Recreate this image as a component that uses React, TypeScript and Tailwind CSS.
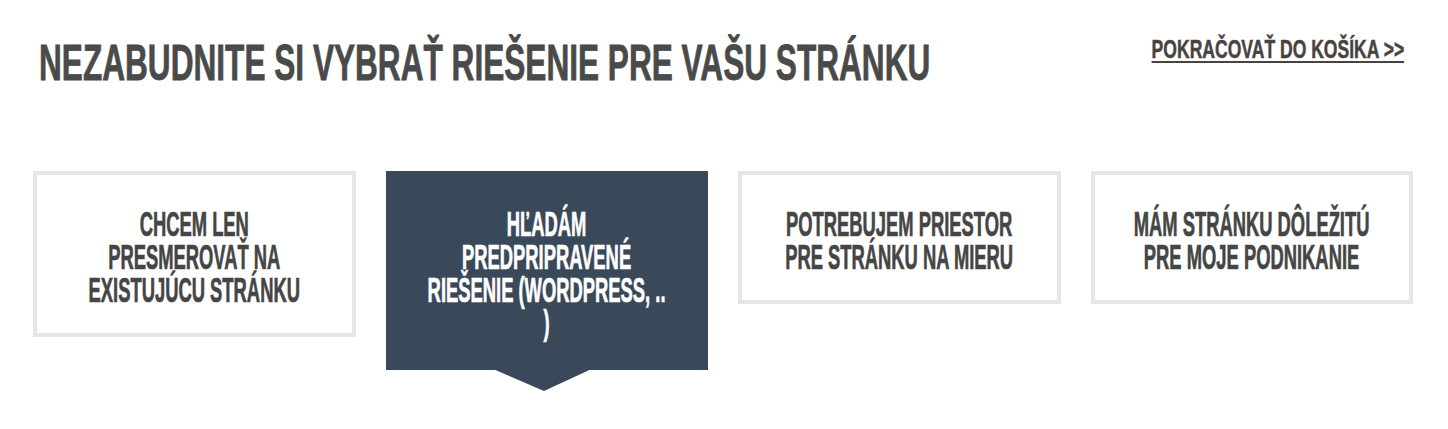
const options = [
  { id: "redirect", lines: ["CHCEM LEN", "PRESMEROVAŤ NA", "EXISTUJÚCU STRÁNKU"] },
  { id: "prebuilt", lines: ["HĽADÁM", "PREDPRIPRAVENÉ", "RIEŠENIE (WORDPRESS, ..", ")"] },
  { id: "custom", lines: ["POTREBUJEM PRIESTOR", "PRE STRÁNKU NA MIERU"] },
  { id: "business", lines: ["MÁM STRÁNKU DÔLEŽITÚ", "PRE MOJE PODNIKANIE"] },
]

const condensed = "font-['Liberation_Sans_Narrow','Liberation_Sans',sans-serif] font-bold"

export default function App() {
  const selected = "prebuilt"

  return (
    <div className="w-[1448px] h-[429px] bg-white pl-[33px] pr-[35px] overflow-hidden">
      <div className="flex items-start justify-between">
        <h2
          className={`${condensed} flex-1 min-w-0 mt-[35px] ml-[6px] text-[50px] leading-[56px] text-[#4a4a4a] scale-x-[0.632] origin-left whitespace-nowrap [-webkit-text-stroke:0.8px_#4a4a4a]`}
        >
          NEZABUDNITE SI VYBRAŤ RIEŠENIE PRE VAŠU STRÁNKU
        </h2>
        <a
          href="#"
          className={`${condensed} shrink-0 mt-[34px] mr-[9px] text-[26px] leading-[30px] text-[#48433f] underline decoration-2 underline-offset-[3px] scale-x-[0.675] origin-right whitespace-nowrap [-webkit-text-stroke:0.5px_#48433f]`}
        >
          POKRAČOVAŤ DO KOŠÍKA &gt;&gt;
        </a>
      </div>

      <div className="grid grid-cols-4 gap-[30px] items-start mt-[80px]">
        {options.map((o) => {
          const active = o.id === selected
          return (
            <button
              key={o.id}
              className={`relative flex flex-col items-center border-4 pt-[32px] pb-[27px] ${
                active ? "bg-[#3a4959] border-[#3a4959] text-white" : "bg-white border-[#e6e6e6] text-[#454545]"
              }`}
            >
              <span
                className={`${condensed} w-max text-center text-[35px] leading-[33px] scale-x-[0.525] ${
                  active ? "[-webkit-text-stroke:0.7px_#ffffff]" : "[-webkit-text-stroke:0.7px_#454545]"
                }`}
              >
                {o.lines.map((l) => (
                  <span key={l} className="block whitespace-nowrap">
                    {l}
                  </span>
                ))}
              </span>
              {active && (
                <svg className="absolute left-[96px] top-full" width="112" height="25" viewBox="0 0 112 25">
                  <polygon points="0,0 112,0 58,25" fill="#3a4959" />
                </svg>
              )}
            </button>
          )
        })}
      </div>
    </div>
  )
}
